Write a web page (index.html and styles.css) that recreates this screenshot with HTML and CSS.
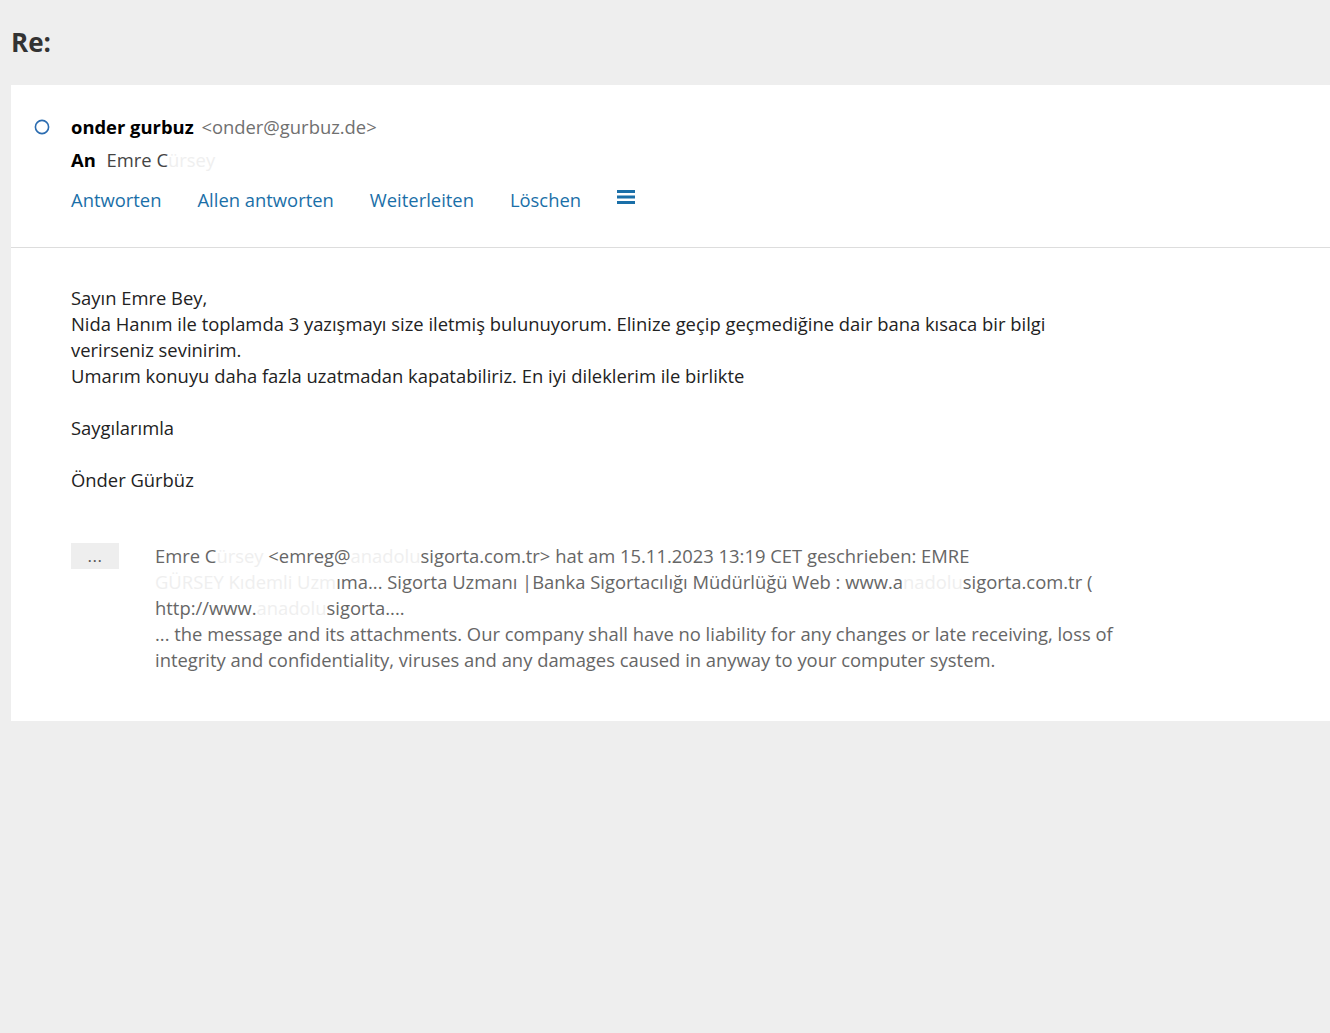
FILE: index.html
```html
<!DOCTYPE html>
<html lang="de">
<head>
    <meta charset="UTF-8">
    <meta name="viewport" content="width=device-width, initial-scale=1.0">
    <title>Re:</title>
    <link rel="stylesheet" href="styles.css">
</head>
<body>
    <h1 class="subject">Re:</h1>

    <div class="message">
        <div class="message-header">
            <div class="status">
                <svg width="16" height="16" viewBox="0 0 16 16">
                    <circle cx="8" cy="8" r="6.6" fill="none" stroke="#2b6cb0" stroke-width="1.6"/>
                </svg>
            </div>
            <div class="header-main">
                <div class="from">
                    <span class="from-name">onder gurbuz</span>
                    <span class="from-mail">&lt;onder@gurbuz.de&gt;</span>
                </div>
                <div class="to">
                    <span class="to-label">An</span>
                    <span class="to-name">Emre C<span class="redacted">ürsey</span></span>
                </div>
                <div class="actions">
                    <a href="#">Antworten</a>
                    <a href="#">Allen antworten</a>
                    <a href="#">Weiterleiten</a>
                    <a href="#">Löschen</a>
                    <button class="more" aria-label="Mehr">
                        <svg width="18" height="16" viewBox="0 0 18 16">
                            <rect x="0" y="1" width="18" height="3" fill="#1a6fa8"/>
                            <rect x="0" y="6.5" width="18" height="3" fill="#1a6fa8"/>
                            <rect x="0" y="12" width="18" height="3" fill="#1a6fa8"/>
                        </svg>
                    </button>
                </div>
            </div>
        </div>

        <div class="message-body">
            <p>
                Sayın Emre Bey,<br>
                Nida Hanım ile toplamda 3 yazışmayı size iletmiş bulunuyorum. Elinize geçip geçmediğine dair bana kısaca bir bilgi verirseniz sevinirim.<br>
                Umarım konuyu daha fazla uzatmadan kapatabiliriz. En iyi dileklerim ile birlikte
            </p>
            <p>Saygılarımla</p>
            <p>Önder Gürbüz</p>

            <div class="quote">
                <button class="quote-toggle">...</button>
                <div class="quote-text">
                    Emre C<span class="redacted">ürsey</span> &lt;emreg@<span class="redacted">anadolu</span>sigorta.com.tr&gt; hat am 15.11.2023 13:19 CET geschrieben: EMRE<br>
                    <span class="redacted">GÜRSEY Kıdemli Uzm</span>ıma... Sigorta Uzmanı |Banka Sigortacılığı Müdürlüğü Web : www.a<span class="redacted">nadolu</span>sigorta.com.tr (<br>
                    http://www.<span class="redacted">anadolu</span>sigorta....<br>
                    ... the message and its attachments. Our company shall have no liability for any changes or late receiving, loss of integrity and confidentiality, viruses and any damages caused in anyway to your computer system.
                </div>
            </div>
        </div>
    </div>
</body>
</html>
```

FILE: styles.css
```css
body {
    margin: 0;
    background-color: #eeeeee;
    font-family: 'Open Sans', 'Noto Sans', sans-serif;
    color: #222;
}

.subject {
    margin: 0;
    padding: 20px 11px 21px;
    font-size: 26px;
    line-height: 44px;
    font-weight: 700;
    color: #333;
}

.message {
    margin-left: 11px;
    background-color: #fff;
    padding-bottom: 48px;
}

.message-header {
    display: flex;
    padding: 26px 0 33px;
    border-bottom: 1px solid #dddddd;
}

.status {
    width: 62px;
    margin-right: -2px;
    display: flex;
    justify-content: center;
    padding-top: 8px;
}

.header-main {
    display: flex;
    flex-direction: column;
}

.from {
    font-size: 18.4px;
    line-height: 32px;
}

.from-name {
    font-weight: 700;
    color: #000;
}

.from-mail {
    color: #707070;
    margin-left: 3px;
}

.to {
    font-size: 18.4px;
    line-height: 34px;
}

.to-label {
    font-weight: 700;
    color: #000;
    margin-right: 6px;
}

.to-name {
    color: #444;
}

.redacted {
    color: #efefef;
}

.actions {
    display: flex;
    align-items: center;
    gap: 36px;
    margin-top: 9px;
    line-height: 28px;
}

.actions a {
    font-size: 18.4px;
    color: #1a6fa8;
    text-decoration: none;
}

.actions .more {
    border: none;
    background: none;
    padding: 0;
    margin-left: 0;
    display: flex;
    margin-top: -6px;
    cursor: pointer;
}

.message-body {
    padding: 37px 0 0 60px;
    max-width: 1060px;
    font-size: 18.4px;
    line-height: 26px;
    color: #222;
}

.message-body p {
    margin: 0 0 26px;
}

.quote {
    display: flex;
    gap: 36px;
    margin-top: 50px;
}

.quote-toggle {
    flex: none;
    width: 48px;
    height: 26px;
    border: none;
    background-color: #eeeeee;
    color: #555;
    font-family: inherit;
    font-size: 17px;
    line-height: 22px;
    letter-spacing: 0.5px;
    padding: 0;
    cursor: pointer;
}

.quote-text {
    color: #666;
}
```
